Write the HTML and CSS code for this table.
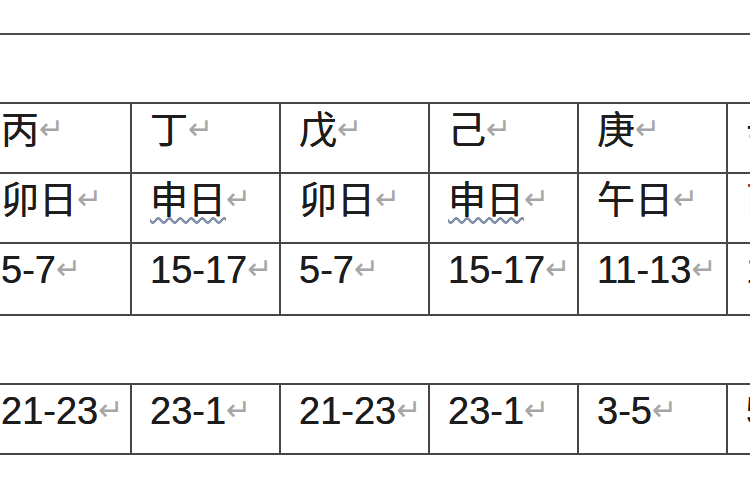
FILE: index.html
```html
<!DOCTYPE html>
<html lang="zh">
<head>
<meta charset="utf-8">
<title>表格</title>
<link rel="stylesheet" href="styles.css">
</head>
<body>
<div class="page">
  <div class="rule"></div>
  <table class="grid t1">
    <tr class="row">
      <td>丙<span class="pm">↵</span></td>
      <td>丁<span class="pm">↵</span></td>
      <td>戊<span class="pm">↵</span></td>
      <td>己<span class="pm">↵</span></td>
      <td>庚<span class="pm">↵</span></td>
      <td>辛<span class="pm">↵</span></td>
    </tr>
    <tr class="row">
      <td>卯日<span class="pm">↵</span></td>
      <td><span class="spell">申日</span><span class="pm">↵</span></td>
      <td>卯日<span class="pm">↵</span></td>
      <td><span class="spell">申日</span><span class="pm">↵</span></td>
      <td>午日<span class="pm">↵</span></td>
      <td class="red">酉日<span class="pm">↵</span></td>
    </tr>
    <tr class="row3">
      <td>5-7<span class="pm">↵</span></td>
      <td>15-17<span class="pm">↵</span></td>
      <td>5-7<span class="pm">↵</span></td>
      <td>15-17<span class="pm">↵</span></td>
      <td>11-13<span class="pm">↵</span></td>
      <td>17-19<span class="pm">↵</span></td>
    </tr>
  </table>
  <table class="grid t2">
    <tr class="row">
      <td>21-23<span class="pm">↵</span></td>
      <td>23-1<span class="pm">↵</span></td>
      <td>21-23<span class="pm">↵</span></td>
      <td>23-1<span class="pm">↵</span></td>
      <td>3-5<span class="pm">↵</span></td>
      <td>5-7<span class="pm">↵</span></td>
    </tr>
  </table>
</div>
</body>
</html>
```
FILE: styles.css
```css
html, body {
  margin: 0;
  padding: 0;
  background: #ffffff;
  overflow: hidden;
}

.page {
  width: 750px;
  height: 500px;
  overflow: hidden;
  font-family: "Liberation Sans", "Noto Sans CJK SC", sans-serif;
  color: #1c1c1c;
}

.rule {
  margin-top: 33px;
  border-top: 2px solid #4e4e4e;
}

.grid {
  border-collapse: collapse;
  table-layout: fixed;
  width: 894px;
  margin-left: -19px;
}

.t1 {
  margin-top: 67px;
}

.t2 {
  margin-top: 67px;
}

.grid td {
  width: 149px;
  border: 2px solid #474747;
  padding: 6px 0 0 18px;
  vertical-align: top;
  font-size: 38px;
  line-height: 40px;
  white-space: nowrap;
  overflow: hidden;
  box-sizing: border-box;
  text-shadow: 0 0 0.6px #1c1c1c;
}

.row {
  height: 70px;
}

.row3 {
  height: 72px;
}

.pm {
  font-family: "DejaVu Sans", sans-serif;
  font-size: 30px;
  line-height: 1;
  color: #a6a6a6;
  text-shadow: none;
  vertical-align: 4px;
  margin-left: 0;
}

.spell {
  text-decoration: underline wavy #8195b8;
  text-decoration-thickness: 1.5px;
  text-underline-offset: 4px;
}

.red {
  color: #c0392b;
}
```
